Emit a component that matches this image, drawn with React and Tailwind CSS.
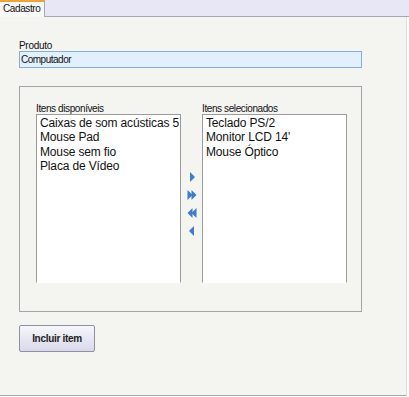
const available = ['Caixas de som acústicas 5', 'Mouse Pad', 'Mouse sem fio', 'Placa de Vídeo'];
const selected = ['Teclado PS/2', "Monitor LCD 14'", 'Mouse Óptico'];

function Arrow({ dir = 'right', double = false }) {
  const flip = dir === 'left' ? 'scale(-1,1) translate(-12,0)' : undefined;
  return (
    <svg width="12" height="12" viewBox="0 0 12 12">
      <g transform={flip}>
        {double ? (
          <>
            <path d="M1.5 1 L6.5 6 L1.5 11 Z" fill="#3d7ad6" />
            <path d="M5.5 1 L10.5 6 L5.5 11 Z" fill="#3d7ad6" />
          </>
        ) : (
          <path d="M4 1 L9 6 L4 11 Z" fill="#3d7ad6" />
        )}
      </g>
    </svg>
  );
}

function ListBox({ label, items }) {
  return (
    <div className="flex flex-col">
      <span className="text-[10px] leading-[11px] h-[11px] text-[#111] tracking-[-0.4px]">{label}</span>
      <div className="w-[145px] h-[169px] bg-white border border-[#9b9b9b] border-b-white pl-[3px] pt-[1px] overflow-hidden">
        {items.map((it) => (
          <div key={it} className="text-[12px] leading-[14.3px] tracking-[-0.15px] text-[#111] whitespace-nowrap">
            {it}
          </div>
        ))}
      </div>
    </div>
  );
}

export default function App() {
  return (
    <div className="w-[409px] h-[397px] bg-white" style={{ fontFamily: '"Liberation Sans", Arial, sans-serif' }}>
      {/* tab strip */}
      <div className="flex h-[17px]">
        <div className="w-[45px] h-[17px] bg-[#f8f8f6] border-t-2 border-t-[#f2a23a] border-r border-r-[#a8a8b8] pl-[3px] text-[10px] leading-[14px] tracking-[-0.4px] text-[#111]">
          Cadastro
        </div>
        <div className="flex-1 bg-[#e7e7f6] border-b border-b-[#a6a6b8]" />
      </div>

      {/* panel */}
      <div className="w-[407px] h-[379px] bg-[#f4f4f1] border-r border-r-[#dedede] border-b border-b-[#a8a8a8] pl-[19px] pt-[23px]">
        <div className="text-[10px] leading-[11px] tracking-[-0.3px] text-[#111]">Produto</div>
        <div className="w-[343px] h-[17px] bg-[#e2effc] border border-[#86acd9] pl-[1px] text-[10px] leading-[15px] tracking-[-0.5px] text-[#111]">
          Computador
        </div>

        <div className="mt-[18px] w-[343px] h-[226px] border border-[#a4a4a4] pl-[16px] pt-[16px]">
          <div className="flex">
            <ListBox label="Itens disponíveis" items={available} />
            <div className="w-[21px] flex flex-col items-center pt-[68px] gap-[6px]">
              <Arrow />
              <Arrow double />
              <Arrow dir="left" double />
              <Arrow dir="left" />
            </div>
            <ListBox label="Itens selecionados" items={selected} />
          </div>
        </div>

        <button className="mt-[13px] w-[76px] h-[27px] rounded-[2px] border border-[#8f8fa0] bg-gradient-to-b from-[#f6f6fb] to-[#d9d9ea] text-[10px] font-bold tracking-[-0.3px] text-[#222]">
          Incluir item
        </button>
      </div>
    </div>
  );
}
